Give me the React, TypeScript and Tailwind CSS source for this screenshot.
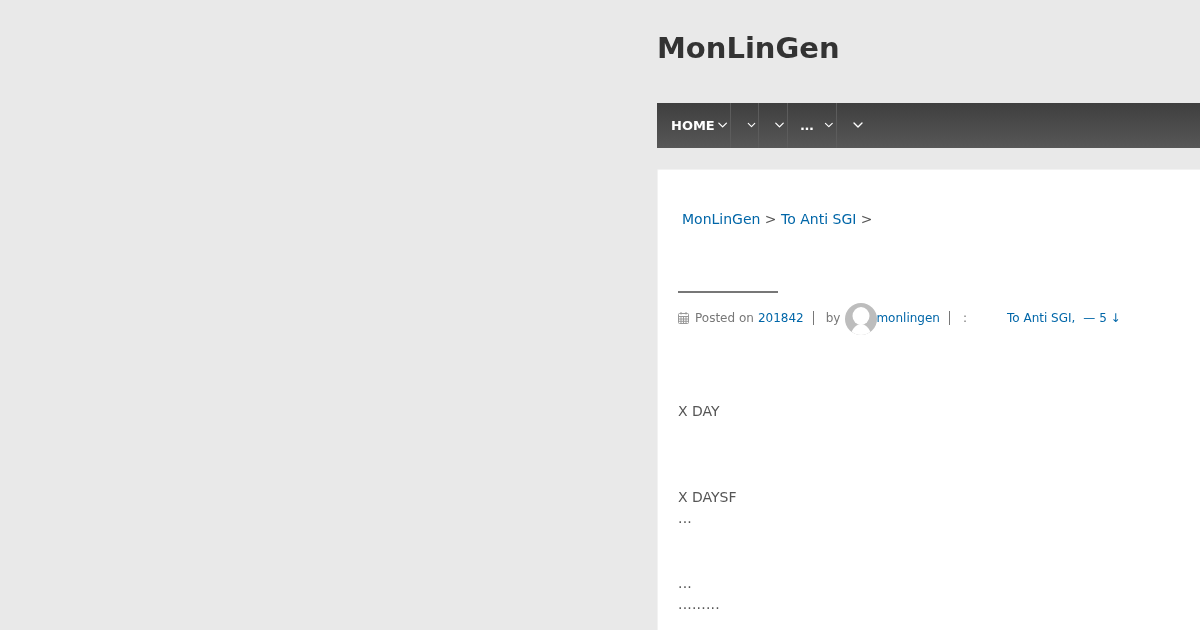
import { ChevronDown } from "lucide-react"

const navItems = [
  { label: "HOME", cls: "w-[74px] pl-[14px]", gap: "-mt-px" },
  { label: "", cls: "w-[28px] pl-[14px]", gap: "-mt-px" },
  { label: "", cls: "w-[29px] pl-[13px]", gap: "-mt-px" },
  { label: "...", cls: "w-[49px] pl-[12px] tracking-[-0.5px]", gap: "ml-[9px] -mt-px" },
  { label: "", cls: "w-[40px] pl-[13px]", gap: "-mt-px" },
]

function CalendarIcon() {
  return (
    <svg className="w-[11px] h-[12px] text-[#999999] mr-[6px]" viewBox="0 0 11 12" fill="none" stroke="currentColor" strokeWidth="1">
      <rect x="0.5" y="1.5" width="10" height="10" rx="1" />
      <path d="M0.5 4.5h10M0.5 7h10M0.5 9.3h10M3 4.5v7M5.5 4.5v7M8 4.5v7M3 0v2.5M8 0v2.5" />
    </svg>
  )
}

function Avatar() {
  return (
    <svg className="w-[32px] h-[32px] shrink-0 mt-[2px]" viewBox="0 0 32 32">
      <defs>
        <clipPath id="avatar-clip">
          <circle cx="16" cy="16" r="16" />
        </clipPath>
      </defs>
      <g clipPath="url(#avatar-clip)">
        <rect width="32" height="32" fill="#bdbdbd" />
        <ellipse cx="16" cy="13" rx="8.5" ry="9" fill="#ffffff" />
        <path d="M6.7 29C8 25 12 21 16 21S24 25 25.3 29V32H6.7z" fill="#ffffff" />
      </g>
    </svg>
  )
}

export default function App() {
  return (
    <div className="h-[630px] overflow-hidden bg-[#e9e9e9] pl-[657px] font-['DejaVu_Sans',sans-serif]">
      {/* Header */}
      <h1 className="pt-[29px] h-[103px] text-[29px] leading-[38px] font-bold text-[#333333] will-change-transform">MonLinGen</h1>

      {/* Nav */}
      <nav className="flex h-[45px] bg-gradient-to-b from-[#3f3f3f] to-[#575757]">
        {navItems.map((item, i) => (
          <div key={i} className={`flex items-center shrink-0 border-r border-[#5c5c5c] last:border-r-0 ${item.cls}`}>
            {item.label && <span className="text-[13px] font-bold text-white will-change-transform">{item.label}</span>}
            <ChevronDown className={`w-[16px] h-[16px] text-white ${item.gap}`} strokeWidth={2} />
          </div>
        ))}
      </nav>

      {/* Card */}
      <main className="mt-[21px] h-[500px] bg-white border-t border-l border-[#f2f2f2] rounded-tl-[2px] pl-[20px] text-[#555555]">
        <div className="will-change-transform">
          <div className="pt-[39px] pl-[4px] text-[14px] leading-[20px]">
            <a className="text-[#0066a8]">MonLinGen</a> &gt; <a className="text-[#0066a8]">To Anti SGI</a> &gt;
          </div>

          <div className="mt-[62px] w-[100px] h-[2px] bg-[#777777]" />

          {/* Entry meta */}
          <div className="mt-[9px] flex items-center h-[32px] text-[12px] text-[#777777] whitespace-nowrap">
            <CalendarIcon />
            <span>Posted on</span>
            <a className="ml-[4px] text-[#0066a8]">201842</a>
            <span className="ml-[9px] mr-[12px] w-px h-[14px] bg-[#777777]" />
            <span className="mr-[5px]">by</span>
            <Avatar />
            <a className="-ml-px text-[#0066a8]">monlingen</a>
            <span className="ml-[9px] w-px h-[14px] bg-[#777777]" />
            <span className="ml-[13px]">:</span>
            <a className="ml-[40px] text-[#0066a8]">To Anti SGI,</a>
            <a className="ml-[8px] text-[#0066a8]">— 5 ↓</a>
          </div>

          {/* Post body */}
          <div className="text-[14px] leading-[21.5px] text-[#555555]">
            <p className="mt-[67px]">X DAY</p>
            <p className="mt-[64px]">X DAYSF<br /><span className="tracking-[0.2px]">...</span></p>
            <p className="mt-[43px] tracking-[0.2px]">...<br />.........</p>
          </div>
        </div>
      </main>
    </div>
  )
}
